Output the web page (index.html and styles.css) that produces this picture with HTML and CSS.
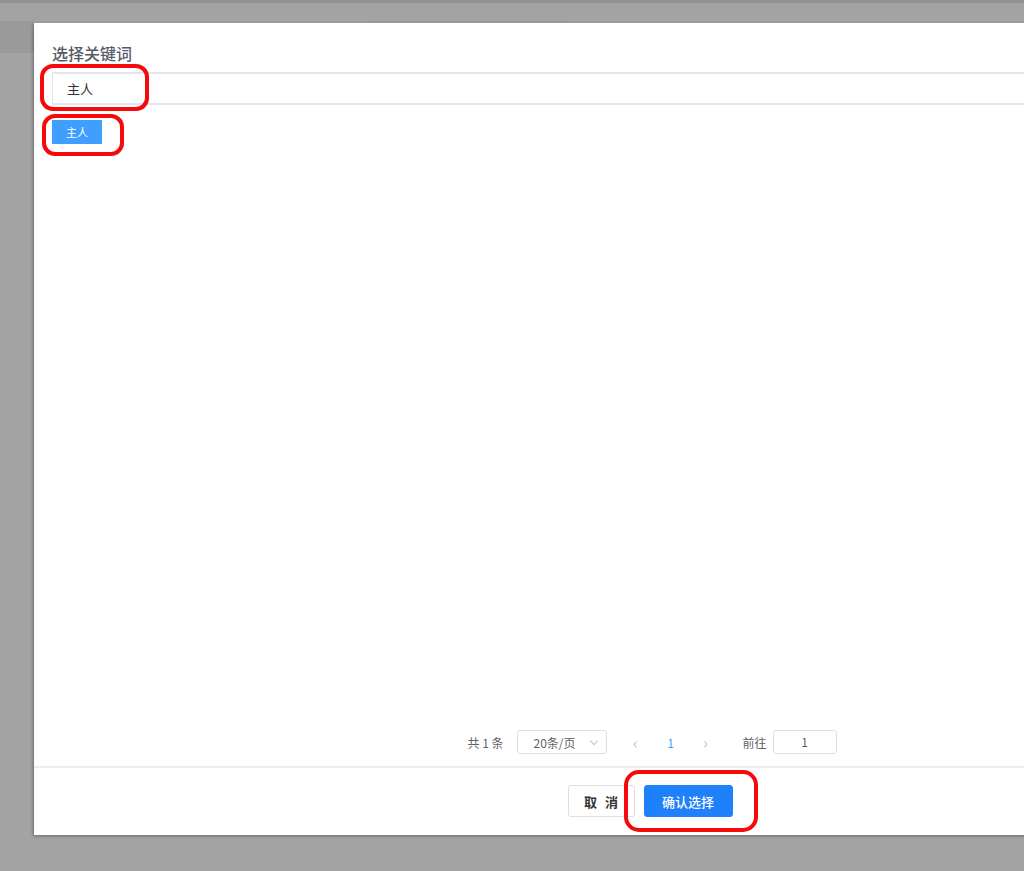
FILE: index.html
```html
<!DOCTYPE html>
<html lang="zh-CN">
  <head>
    <meta charset="utf-8" />
    <title>选择关键词</title>
    <link rel="stylesheet" href="styles.css">
  </head>
  <body>
    <div class="page">
      <div class="topbar"></div>
      <div class="tabstrip">
        <div class="side"></div>
        <div class="tab tab-a"></div>
        <div class="tab tab-b"></div>
      </div>
    </div>

    <div class="overlay">
      <div class="dialog">
        <div class="dialog-header">选择关键词</div>
        <div class="dialog-body">
          <div class="search">
            <input class="search-input" type="text" value="主人" />
          </div>
          <div class="tags">
            <span class="tag">主人</span>
          </div>
          <div class="pager">
            <span class="total">共 1 条</span>
            <span class="sizes">20条/页<span class="caret"></span></span>
            <span class="nav prev">&lsaquo;</span>
            <span class="num active">1</span>
            <span class="nav next">&rsaquo;</span>
            <span class="jump">前往<span class="jump-box">1</span></span>
          </div>
        </div>
        <div class="dialog-footer">
          <button class="btn btn-cancel">取 消</button>
          <button class="btn btn-primary">确认选择</button>
        </div>
      </div>

      <div class="mark mark-input"></div>
      <div class="mark mark-tag"></div>
      <div class="mark mark-ok"></div>
    </div>
  </body>
</html>
```

FILE: styles.css
```css
html, body { margin: 0; padding: 0; }
body {
  width: 1024px; height: 871px; overflow: hidden; position: relative;
  background: #a3a3a3;
  font-family: "Noto Sans CJK SC", "Noto Sans", sans-serif;
  color: #606266;
}

/* page behind the overlay */
.topbar { height: 18px; border-top: 3px solid #8f9197; background: #a3a3a3; }
.tabstrip { height: 32px; display: flex; }
.tabstrip .side { width: 34px; background: #9a9a9a; }
.tab { height: 1px; border-top: 1px solid #989898; }
.tab-a { width: 100px; margin-left: 333px; }
.tab-b { width: 100px; margin-left: 2px; }

/* overlay clips the dialog at the window edge */
.overlay { position: absolute; left: 0; top: 0; width: 1024px; height: 871px; overflow: hidden; }

/* dialog */
.dialog {
  position: absolute; left: 34px; top: 23px;
  width: 1232px; height: 812px;
  background: #fff;
  box-shadow: -1px 1px 3px rgba(0,0,0,.35);
  display: flex; flex-direction: column;
}
.dialog-header {
  padding: 18px 18px 0 18px;
  font-size: 16px; line-height: 24px; font-weight: 500;
  color: #575b68;
}
.dialog-body { flex: 1; padding: 7px 0 12px 18px; display: flex; flex-direction: column; }
.search-input {
  display: block; box-sizing: border-box; width: 100%;
  height: 33px; padding: 0 14px;
  border: 1px solid #e4e6ee; border-right: 0; border-top-width: 2px; border-bottom-width: 2px;
  font-family: inherit; font-size: 13px; color: #333;
  outline: none;
}
.tags { margin-top: 13px; flex: 1; }
.tag {
  display: inline-block; width: 50px; height: 24px; line-height: 24px;
  text-align: center; font-size: 11px; color: #fff;
  background: #409eff;
}

.pager {
  display: flex; align-items: center; justify-content: center;
  height: 24px; font-size: 12px; color: #606266;
  padding-right: 14px;
}
.total { margin-right: 13px; }
.sizes {
  box-sizing: border-box; width: 90px; height: 24px;
  border: 1px solid #dcdfe6; border-radius: 3px;
  display: flex; align-items: center; padding-left: 16px; position: relative;
  color: #606266;
}
.caret {
  position: absolute; right: 9px; top: 7px;
  width: 5px; height: 5px;
  border-right: 1px solid #c0c4cc; border-bottom: 1px solid #c0c4cc;
  transform: rotate(45deg);
}
.nav { width: 30px; text-align: center; color: #c0c4cc; font-size: 16px; }
.prev { margin-left: 14px; }
.num { width: 40px; text-align: center; }
.num.active { color: #409eff; }
.jump { margin-left: 22px; display: flex; align-items: center; }
.jump-box {
  box-sizing: border-box; width: 64px; height: 24px; margin-left: 6px;
  border: 1px solid #dcdfe6; border-radius: 3px;
  text-align: center; line-height: 22px; color: #606266;
}

.dialog-footer {
  border-top: 2px solid #ecedf2;
  padding: 17px 0 18px;
  display: flex; justify-content: center; gap: 9px;
}
.btn {
  height: 32px; padding: 0; box-sizing: border-box; width: 67px;
  border: 1px solid #dcdfe6; border-radius: 3px; background: #fff;
  font-family: inherit; font-size: 13px; font-weight: 700; color: #333;
}
.btn-cancel { word-spacing: 5px; }
.btn-primary {
  width: 89px; border-color: #1f80fc; background: #1f80fc;
  color: #fff; font-weight: 500;
}

/* red annotation marks */
.mark {
  position: absolute; box-sizing: border-box;
  border: 4px solid #f40a0a; border-radius: 13px;
}
.mark-input { left: 40px; top: 64px; width: 109px; height: 47px; }
.mark-tag { left: 42px; top: 114px; width: 82px; height: 42px; }
.mark-ok { left: 624px; top: 770px; width: 134px; height: 62px; border-radius: 15px; }
```
